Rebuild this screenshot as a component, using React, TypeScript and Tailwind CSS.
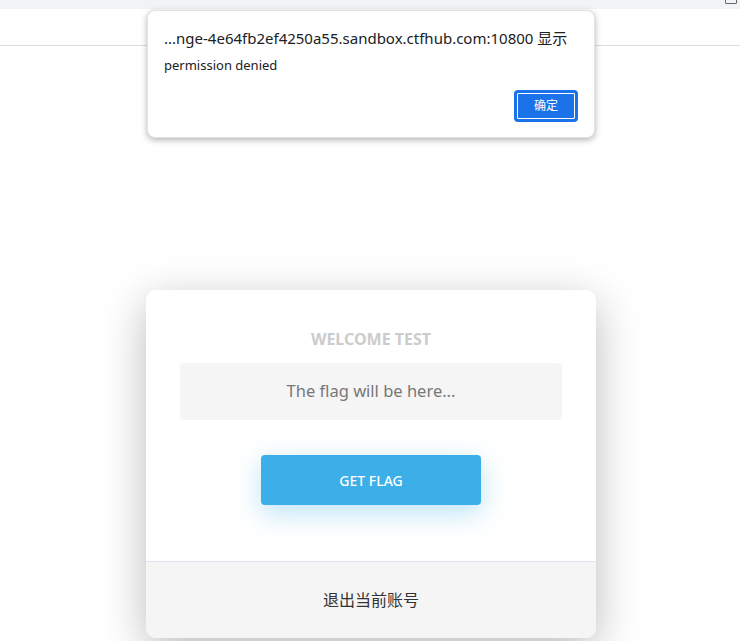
import React from "react";

export default function App() {
  const font = { fontFamily: '"Noto Sans", "Open Sans", "Noto Sans CJK SC", sans-serif' };
  return (
    <div className="relative min-h-[641px] w-full overflow-hidden bg-white" style={font}>
      {/* browser strip */}
      <div className="relative h-[9px] bg-[#f1f3f4]">
        <div className="absolute right-[3px] top-[-6px] h-[10px] w-[12px] border border-[#666] rounded-[1px]" />
      </div>
      <div className="h-[37px] border-b border-[#dcdcdc] bg-white" />

      {/* main */}
      <main className="flex justify-center pt-[244px] pl-[2px]">
        <div className="w-[450px] overflow-hidden rounded-[10px] bg-white shadow-[0_12px_45px_rgba(0,0,0,0.27)]">
          <div className="flex flex-col items-center px-[34px] pt-[38px] pb-[56px]">
            <h1 className="text-[16px] font-bold leading-[22px] text-[#cccccc]">WELCOME TEST</h1>
            <div className="mt-[13px] flex h-[57px] w-full items-center justify-center rounded-[4px] bg-[#f5f5f5] text-[16.5px] text-[#777777]">
              The flag will be here...
            </div>
            <button className="mt-[35px] h-[50px] w-[220px] rounded-[4px] bg-[#3caee8] text-[14px] font-medium text-white shadow-[0_8px_28px_rgba(60,174,232,0.35)]">
              GET FLAG
            </button>
          </div>
          <div className="flex h-[77px] items-center justify-center border-t border-[#dde5ee] bg-[#f5f5f5] text-[16px] text-[#333333]">
            退出当前账号
          </div>
        </div>
      </main>

      {/* alert dialog */}
      <div className="absolute left-[147px] top-[10px] w-[448px] rounded-[8px] border border-[#e3e3e3] bg-white px-[16px] pt-[16px] pb-[15px] shadow-[0_2px_6px_rgba(0,0,0,0.3)]">
        <div className="text-[15px] leading-[22px] text-[#202124]">...nge-4e64fb2ef4250a55.sandbox.ctfhub.com:10800 显示</div>
        <div className="mt-[7px] text-[13px] leading-[18px] text-[#202124]">permission denied</div>
        <div className="mt-[16px] flex justify-end">
          <button className="flex h-[32px] w-[64px] items-center justify-center rounded-[4px] border-2 border-[#1a73e8] bg-[#1a73e8] text-[12px] text-white outline outline-1 outline-offset-[-4px] outline-white">
            确定
          </button>
        </div>
      </div>
    </div>
  );
}
